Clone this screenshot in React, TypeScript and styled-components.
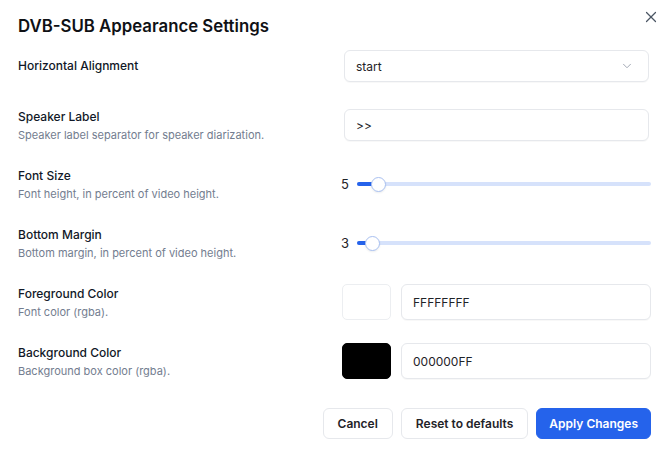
import React, { useState } from "react";
import styled, { createGlobalStyle } from "styled-components";
import { X, ChevronDown } from "lucide-react";

const GlobalStyle = createGlobalStyle`
  html, body {
    margin: 0;
    padding: 0;
    background: #ffffff;
  }
  body {
    font-family: Inter, "Noto Sans", "Liberation Sans", sans-serif;
    color: #111827;
    -webkit-font-smoothing: antialiased;
  }
  * { box-sizing: border-box; }
`;

const Dialog = styled.div`
  position: relative;
  width: 670px;
  height: 455px;
  padding: 14px 19px 16px 18px;
  display: flex;
  flex-direction: column;
  background: #ffffff;
`;

const Title = styled.h2`
  margin: 0;
  font-size: 16.8px;
  line-height: 24px;
  font-weight: 600;
  color: #0f1115;
`;

const CloseButton = styled.button`
  position: absolute;
  top: 8px;
  right: 10px;
  width: 18px;
  height: 18px;
  padding: 0;
  border: 0;
  background: transparent;
  color: #4b5563;
  display: flex;
  align-items: center;
  justify-content: center;
  cursor: pointer;
`;

const Form = styled.div`
  margin-top: 10px;
  display: flex;
  flex-direction: column;
  gap: 23px;
`;

const Row = styled.div`
  display: grid;
  grid-template-columns: 1fr 311px;
  align-items: center;
  min-height: 36px;
`;

const LabelBlock = styled.div`
  display: flex;
  flex-direction: column;
  gap: 3px;
`;

const Label = styled.div`
  font-size: 12px;
  line-height: 16px;
  font-weight: 500;
  color: #111827;
`;

const Hint = styled.div`
  font-size: 11px;
  line-height: 14px;
  color: #737d8f;
`;

const Field = styled.div<{ $inset?: number; $gap?: number }>`
  display: flex;
  align-items: center;
  gap: ${(p) => p.$gap ?? 10}px;
  padding-left: ${(p) => p.$inset ?? 0}px;
`;

const boxBase = `
  height: 32px;
  border: 1px solid #e6e8ec;
  border-radius: 6px;
  background: #ffffff;
  font-family: Inter, "Noto Sans", "Liberation Sans", sans-serif;
  font-size: 12px;
  color: #1f2328;
  box-shadow: 0 1px 1px rgba(16, 24, 40, 0.03);
`;

const SelectBox = styled.button`
  ${boxBase}
  width: 305px;
  padding: 0 14px 0 11px;
  display: flex;
  align-items: center;
  justify-content: space-between;
  text-align: left;
  cursor: pointer;
  svg { color: #9ca3af; }
`;

const TextInput = styled.input<{ $width: number; $tall?: boolean }>`
  ${boxBase}
  width: ${(p) => p.$width}px;
  height: ${(p) => (p.$tall ? 36 : 32)}px;
  padding: 0 11px;
  outline: none;
`;

const SliderValue = styled.span`
  width: 7px;
  font-size: 13px;
  color: #1f2328;
`;

const Track = styled.div`
  position: relative;
  flex: 1;
  height: 4px;
  border-radius: 2px;
  background: #d6e2fb;
`;

const Fill = styled.div`
  position: absolute;
  left: 0;
  top: 0;
  bottom: 0;
  border-radius: 2px;
  background: #2563eb;
`;

const Thumb = styled.div`
  position: absolute;
  top: 50%;
  width: 15px;
  height: 15px;
  margin-left: -7.5px;
  margin-top: -7.5px;
  border-radius: 50%;
  background: #ffffff;
  border: 1.5px solid #a9c1f1;
  box-shadow: 0 1px 2px rgba(16, 24, 40, 0.08);
`;

const Swatch = styled.div<{ $color: string }>`
  width: 49px;
  height: 36px;
  border-radius: 5px;
  background: ${(p) => p.$color};
  border: 1px solid ${(p) => (p.$color === "#000000" ? "#000000" : "#eceef1")};
`;

const Footer = styled.div`
  margin-top: auto;
  display: flex;
  justify-content: flex-end;
  gap: 8px;
`;

const Button = styled.button<{ $primary?: boolean }>`
  height: 31px;
  padding: 0 ${(p) => (p.$primary ? 12 : 14)}px;
  border-radius: 6px;
  font-family: Inter, "Noto Sans", "Liberation Sans", sans-serif;
  font-size: 12px;
  font-weight: 600;
  color: ${(p) => (p.$primary ? "#ffffff" : "#1f2328")};
  background: ${(p) => (p.$primary ? "#2563eb" : "#ffffff")};
  border: 1px solid ${(p) => (p.$primary ? "#2563eb" : "#e6e8ec")};
  cursor: pointer;
`;

function Slider({ value, max = 100 }: { value: number; max?: number }) {
  const thumbHalf = 7;
  const pct = value / max;
  const pos = `calc(${thumbHalf}px + (100% - ${thumbHalf * 2}px) * ${pct})`;
  return (
    <Field $inset={1} $gap={9}>
      <SliderValue>{value}</SliderValue>
      <Track>
        <Fill style={{ width: pos }} />
        <Thumb style={{ left: pos }} />
      </Track>
    </Field>
  );
}

export default function App() {
  const [speaker, setSpeaker] = useState(">>");
  const [fg, setFg] = useState("FFFFFFFF");
  const [bg, setBg] = useState("000000FF");

  return (
    <>
      <GlobalStyle />
      <Dialog>
        <Title>DVB-SUB Appearance Settings</Title>
        <CloseButton aria-label="Close">
          <X size={18} strokeWidth={1.6} />
        </CloseButton>

        <Form>
          <Row>
            <Label>Horizontal Alignment</Label>
            <Field $inset={4}>
              <SelectBox>
                <span>start</span>
                <ChevronDown size={14} strokeWidth={1.6} />
              </SelectBox>
            </Field>
          </Row>

          <Row>
            <LabelBlock>
              <Label>Speaker Label</Label>
              <Hint>Speaker label separator for speaker diarization.</Hint>
            </LabelBlock>
            <Field $inset={4}>
              <TextInput
                $width={305}
                value={speaker}
                onChange={(e) => setSpeaker(e.target.value)}
              />
            </Field>
          </Row>

          <Row>
            <LabelBlock>
              <Label>Font Size</Label>
              <Hint>Font height, in percent of video height.</Hint>
            </LabelBlock>
            <Slider value={5} />
          </Row>

          <Row>
            <LabelBlock>
              <Label>Bottom Margin</Label>
              <Hint>Bottom margin, in percent of video height.</Hint>
            </LabelBlock>
            <Slider value={3} />
          </Row>

          <Row>
            <LabelBlock>
              <Label>Foreground Color</Label>
              <Hint>Font color (rgba).</Hint>
            </LabelBlock>
            <Field $inset={2}>
              <Swatch $color="#ffffff" />
              <TextInput
                $width={250}
                $tall
                value={fg}
                onChange={(e) => setFg(e.target.value)}
              />
            </Field>
          </Row>

          <Row>
            <LabelBlock>
              <Label>Background Color</Label>
              <Hint>Background box color (rgba).</Hint>
            </LabelBlock>
            <Field $inset={2}>
              <Swatch $color="#000000" />
              <TextInput
                $width={250}
                $tall
                value={bg}
                onChange={(e) => setBg(e.target.value)}
              />
            </Field>
          </Row>
        </Form>

        <Footer>
          <Button>Cancel</Button>
          <Button>Reset to defaults</Button>
          <Button $primary>Apply Changes</Button>
        </Footer>
      </Dialog>
    </>
  );
}
